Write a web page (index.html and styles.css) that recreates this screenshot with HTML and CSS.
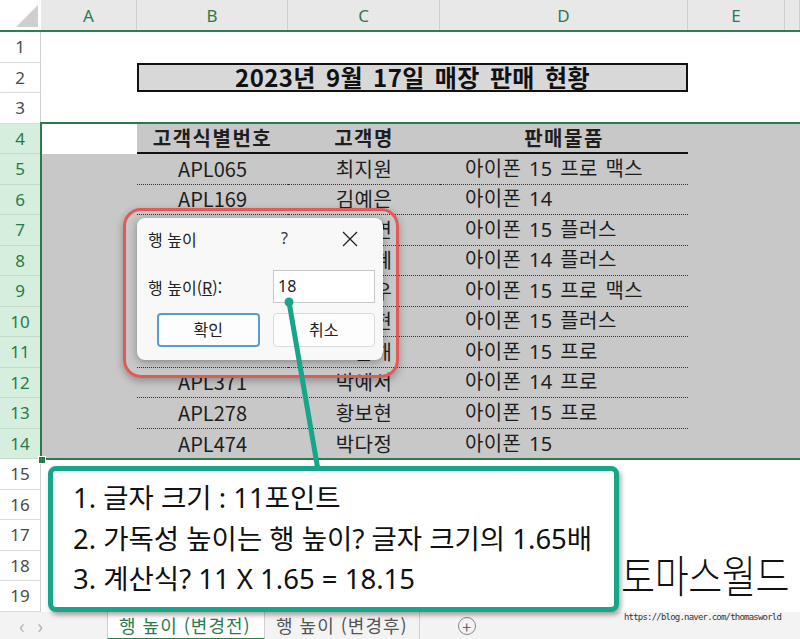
FILE: index.html
```html
<!DOCTYPE html>
<html lang="ko">
<head>
  <meta charset="UTF-8">
  <title>행 높이 (변경전)</title>
  <link rel="stylesheet" href="styles.css">
</head>
<body>
  <div class="app">
    <div class="sheet">
      <div class="row colhead">
        <div class="corner"></div>
        <div class="ch">A</div>
        <div class="ch">B</div>
        <div class="ch">C</div>
        <div class="ch">D</div>
        <div class="ch">E</div>
        <div class="ch"></div>
      </div>

      <div class="row"><div class="rh">1</div><div class="c"></div><div class="c"></div><div class="c"></div><div class="c"></div><div class="c"></div><div class="c"></div></div>
      <div class="row">
        <div class="rh">2</div><div class="c"></div>
        <div class="c title"><span>2023년 9월 17일 매장 판매 현황</span></div>
        <div class="c"></div><div class="c"></div>
      </div>
      <div class="row"><div class="rh">3</div><div class="c"></div><div class="c"></div><div class="c"></div><div class="c"></div><div class="c"></div><div class="c"></div></div>

      <div class="row sel">
        <div class="rh">4</div><div class="c active"></div>
        <div class="c head">고객식별번호</div>
        <div class="c head">고객명</div>
        <div class="c head">판매물품</div>
        <div class="c"></div><div class="c"></div>
      </div>
      <div class="row sel data"><div class="rh">5</div><div class="c"></div><div class="c id">APL065</div><div class="c name">최지원</div><div class="c item">아이폰 15 프로 맥스</div><div class="c"></div><div class="c"></div></div>
      <div class="row sel data"><div class="rh">6</div><div class="c"></div><div class="c id">APL169</div><div class="c name">김예은</div><div class="c item">아이폰 14</div><div class="c"></div><div class="c"></div></div>
      <div class="row sel data"><div class="rh">7</div><div class="c"></div><div class="c id">APL203</div><div class="c name">이서연</div><div class="c item">아이폰 15 플러스</div><div class="c"></div><div class="c"></div></div>
      <div class="row sel data"><div class="rh">8</div><div class="c"></div><div class="c id">APL118</div><div class="c name">정지혜</div><div class="c item">아이폰 14 플러스</div><div class="c"></div><div class="c"></div></div>
      <div class="row sel data"><div class="rh">9</div><div class="c"></div><div class="c id">APL452</div><div class="c name">강민우</div><div class="c item">아이폰 15 프로 맥스</div><div class="c"></div><div class="c"></div></div>
      <div class="row sel data"><div class="rh">10</div><div class="c"></div><div class="c id">APL087</div><div class="c name">윤지현</div><div class="c item">아이폰 15 플러스</div><div class="c"></div><div class="c"></div></div>
      <div class="row sel data"><div class="rh">11</div><div class="c"></div><div class="c id">APL326</div><div class="c name">조은해</div><div class="c item">아이폰 15 프로</div><div class="c"></div><div class="c"></div></div>
      <div class="row sel data"><div class="rh">12</div><div class="c"></div><div class="c id">APL371</div><div class="c name">박예서</div><div class="c item">아이폰 14 프로</div><div class="c"></div><div class="c"></div></div>
      <div class="row sel data"><div class="rh">13</div><div class="c"></div><div class="c id">APL278</div><div class="c name">황보현</div><div class="c item">아이폰 15 프로</div><div class="c"></div><div class="c"></div></div>
      <div class="row sel data last"><div class="rh">14</div><div class="c"></div><div class="c id">APL474</div><div class="c name">박다정</div><div class="c item">아이폰 15</div><div class="c"></div><div class="c"></div></div>

      <div class="row"><div class="rh">15</div><div class="c"></div><div class="c"></div><div class="c"></div><div class="c"></div><div class="c"></div><div class="c"></div></div>
      <div class="row"><div class="rh">16</div><div class="c"></div><div class="c"></div><div class="c"></div><div class="c"></div><div class="c"></div><div class="c"></div></div>
      <div class="row"><div class="rh">17</div><div class="c"></div><div class="c"></div><div class="c"></div><div class="c"></div><div class="c"></div><div class="c"></div></div>
      <div class="row"><div class="rh">18</div><div class="c"></div><div class="c"></div><div class="c"></div><div class="c"></div><div class="c"></div><div class="c"></div></div>
      <div class="row"><div class="rh">19</div><div class="c"></div><div class="c"></div><div class="c"></div><div class="c"></div><div class="c"></div><div class="c"></div></div>
    </div>

    <div class="tabs">
      <span class="nav">&#8249;</span>
      <span class="nav">&#8250;</span>
      <span class="tab current">행 높이 (변경전)</span>
      <span class="tab">행 높이 (변경후)</span>
      <span class="add">+</span>
    </div>

    <!-- overlays -->
    <div class="selection"></div>
    <div class="handle"></div>

    <div class="ring"></div>
    <div class="dialog">
      <div class="dlg-title">
        <span>행 높이</span>
        <span class="help">?</span>
        <svg class="close" width="18" height="18" viewBox="0 0 18 18"><path d="M2 2L16 16M16 2L2 16" stroke="#222" stroke-width="1.3" fill="none"/></svg>
      </div>
      <div class="dlg-field">
        <label>행 높이(<u>R</u>):</label>
        <div class="input">18</div>
      </div>
      <div class="dlg-buttons">
        <div class="btn primary">확인</div>
        <div class="btn">취소</div>
      </div>
    </div>

    <svg class="pointer" width="800" height="639" viewBox="0 0 800 639">
      <line x1="289" y1="302" x2="318" y2="470" stroke="#17a689" stroke-width="5" stroke-linecap="round"/>
      <circle cx="289" cy="302" r="4.5" fill="#17a689"/>
    </svg>

    <div class="callout">
      <p>1. 글자 크기 : 11포인트</p>
      <p>2. 가독성 높이는 행 높이? 글자 크기의 1.65배</p>
      <p>3. 계산식? 11 X 1.65 = 18.15</p>
    </div>

    <div class="brand">토마스월드</div>
    <div class="url">https://blog.naver.com/thomasworld</div>
  </div>
</body>
</html>
```

FILE: styles.css
```css
body {
  margin: 0;
  font-family: "Noto Sans CJK KR", "Noto Sans", sans-serif;
  background: #fff;
}
.app {
  position: relative;
  width: 800px;
  height: 639px;
  overflow: hidden;
  color: #1e1e1e;
}
.row {
  display: grid;
  grid-template-columns: 41px 96px 151px 152px 248px 97px 15px;
  height: 30.5px;
}
.colhead {
  height: 32px;
  background: #e8e8e8;
  border-bottom: 2px solid #2f7d52;
  box-sizing: border-box;
}
.corner {
  position: relative;
  background: #fff;
}
.corner::after {
  content: "";
  position: absolute;
  right: 3px;
  bottom: 3px;
  border-left: 22px solid transparent;
  border-bottom: 22px solid #cfcfcf;
}
.ch {
  display: flex;
  align-items: center;
  justify-content: center;
  font-family: "Noto Sans", sans-serif;
  font-size: 17px;
  color: #2e7a4e;
  border-right: 1px solid #d0d0d0;
}
.rh {
  display: flex;
  align-items: center;
  justify-content: center;
  font-family: "Noto Sans", sans-serif;
  font-size: 17px;
  color: #4a4a4a;
  background: #fff;
  border-bottom: 1px solid #dcdcdc;
  border-right: 1px solid #cfcfcf;
  box-sizing: border-box;
}
.c {
  display: flex;
  align-items: center;
  font-size: 20px;
  line-height: 1.2;
  white-space: nowrap;
  box-sizing: border-box;
}
.sel .rh {
  background: #d5eedd;
  color: #2a7a4c;
  border-bottom-color: #c2dccb;
}
.sel .c {
  background: #c8c8c8;
}
.sel .c.active {
  background: #fff;
}
.title {
  grid-column: span 3;
  align-items: stretch;
}
.title span {
  flex: 1;
  display: flex;
  align-items: center;
  justify-content: center;
  margin-bottom: 1px;
  background: #d8d8d8;
  border: 2px solid #111;
  font-size: 24px;
  font-weight: 700;
  line-height: 1;
  letter-spacing: 0.4px;
  word-spacing: 3px;
  color: #111;
}
.head {
  justify-content: center;
  font-weight: 700;
  letter-spacing: 1.5px;
  border-bottom: 2px solid #111;
}
.data .id,
.data .name,
.data .item {
  border-bottom: 1px dotted #333;
}
.data.last .c {
  border-bottom: none;
}
.id,
.name {
  justify-content: center;
}
.name {
  letter-spacing: 0.5px;
}
.item {
  padding-left: 25px;
  font-family: "Noto Sans", "Noto Sans CJK KR", sans-serif;
  letter-spacing: 0.4px;
  word-spacing: 2px;
}

.tabs {
  display: flex;
  align-items: center;
  height: 28px;
  background: #f3f3f3;
  font-size: 18px;
  color: #555;
}
.nav {
  width: 18px;
  text-align: center;
  color: #b0b0b0;
  font-size: 20px;
}
.nav:first-child {
  margin-left: 13px;
}
.tab {
  height: 28px;
  line-height: 26px;
  padding: 0 11px;
  letter-spacing: 1px;
  white-space: nowrap;
  border-right: 1px solid #cfcfcf;
  box-sizing: border-box;
}
.tab.current {
  margin-left: 58px;
  width: 158px;
  background: #fff;
  color: #2a7a4c;
  border-left: 1px solid #cfcfcf;
  border-bottom: 2px solid #2a7a4c;
}
.add {
  margin-left: 38px;
  width: 18px;
  height: 18px;
  line-height: 16px;
  text-align: center;
  border: 1px solid #888;
  border-radius: 50%;
  font-size: 16px;
  color: #666;
  box-sizing: border-box;
}

.selection {
  position: absolute;
  left: 40px;
  top: 122px;
  width: 780px;
  height: 338px;
  border: 2px solid #2a7a4c;
  box-sizing: border-box;
}
.handle {
  position: absolute;
  left: 38px;
  top: 456px;
  width: 6px;
  height: 6px;
  background: #2a7a4c;
  border: 1px solid #fff;
}

.ring {
  position: absolute;
  left: 123px;
  top: 208px;
  width: 276px;
  height: 170px;
  border: 3px solid #e05a5a;
  border-radius: 18px;
  box-sizing: border-box;
  box-shadow: 0 3px 8px rgba(0, 0, 0, 0.3);
}
.dialog {
  position: absolute;
  left: 137px;
  top: 218px;
  width: 246px;
  height: 142px;
  background: #f8f8f8;
  border-radius: 8px;
  box-shadow: 0 2px 8px rgba(0, 0, 0, 0.35);
  font-size: 16px;
  color: #222;
}
.dlg-title {
  position: relative;
  height: 40px;
  padding: 9px 0 0 11px;
  box-sizing: border-box;
}
.help {
  position: absolute;
  left: 144px;
  top: 9px;
  font-family: "Noto Sans", sans-serif;
  color: #333;
}
.close {
  position: absolute;
  left: 204px;
  top: 12px;
}
.dlg-field {
  display: flex;
  align-items: center;
  justify-content: space-between;
  padding: 12px 8px 0 11px;
}
.input {
  width: 102px;
  height: 33px;
  line-height: 31px;
  padding-left: 4px;
  background: #fff;
  border: 1px solid #c9c9c9;
  box-sizing: border-box;
  font-family: "Noto Sans", sans-serif;
}
.dlg-buttons {
  display: flex;
  gap: 13px;
  padding: 10px 8px 0 20px;
}
.btn {
  width: 103px;
  height: 34px;
  line-height: 31px;
  text-align: center;
  background: #fdfdfd;
  border: 1px solid #dadada;
  border-radius: 4px;
  box-sizing: border-box;
}
.btn.primary {
  border: 2px solid #5a9bd6;
  line-height: 29px;
}

.pointer {
  position: absolute;
  left: 0;
  top: 0;
}
.callout {
  position: absolute;
  left: 48px;
  top: 466px;
  width: 571px;
  height: 146px;
  padding: 7px 0 0 20px;
  background: #fff;
  border: 5px solid #17a689;
  border-radius: 8px;
  box-sizing: border-box;
  box-shadow: 2px 3px 5px rgba(0, 0, 0, 0.35);
}
.callout p {
  margin: 0;
  font-family: "Noto Sans", "Noto Sans CJK KR", sans-serif;
  font-size: 27.5px;
  line-height: 40.5px;
  white-space: nowrap;
  color: #111;
}
.brand {
  position: absolute;
  left: 621px;
  top: 552px;
  font-size: 37px;
  font-weight: 300;
  line-height: 1;
  letter-spacing: -0.4px;
  white-space: nowrap;
  color: #111;
  transform: scaleY(1.2);
  transform-origin: left top;
}
.url {
  position: absolute;
  left: 624px;
  top: 612px;
  font-family: "DejaVu Sans Mono", monospace;
  font-size: 9px;
  letter-spacing: -0.8px;
  white-space: nowrap;
  color: #333;
}
```
